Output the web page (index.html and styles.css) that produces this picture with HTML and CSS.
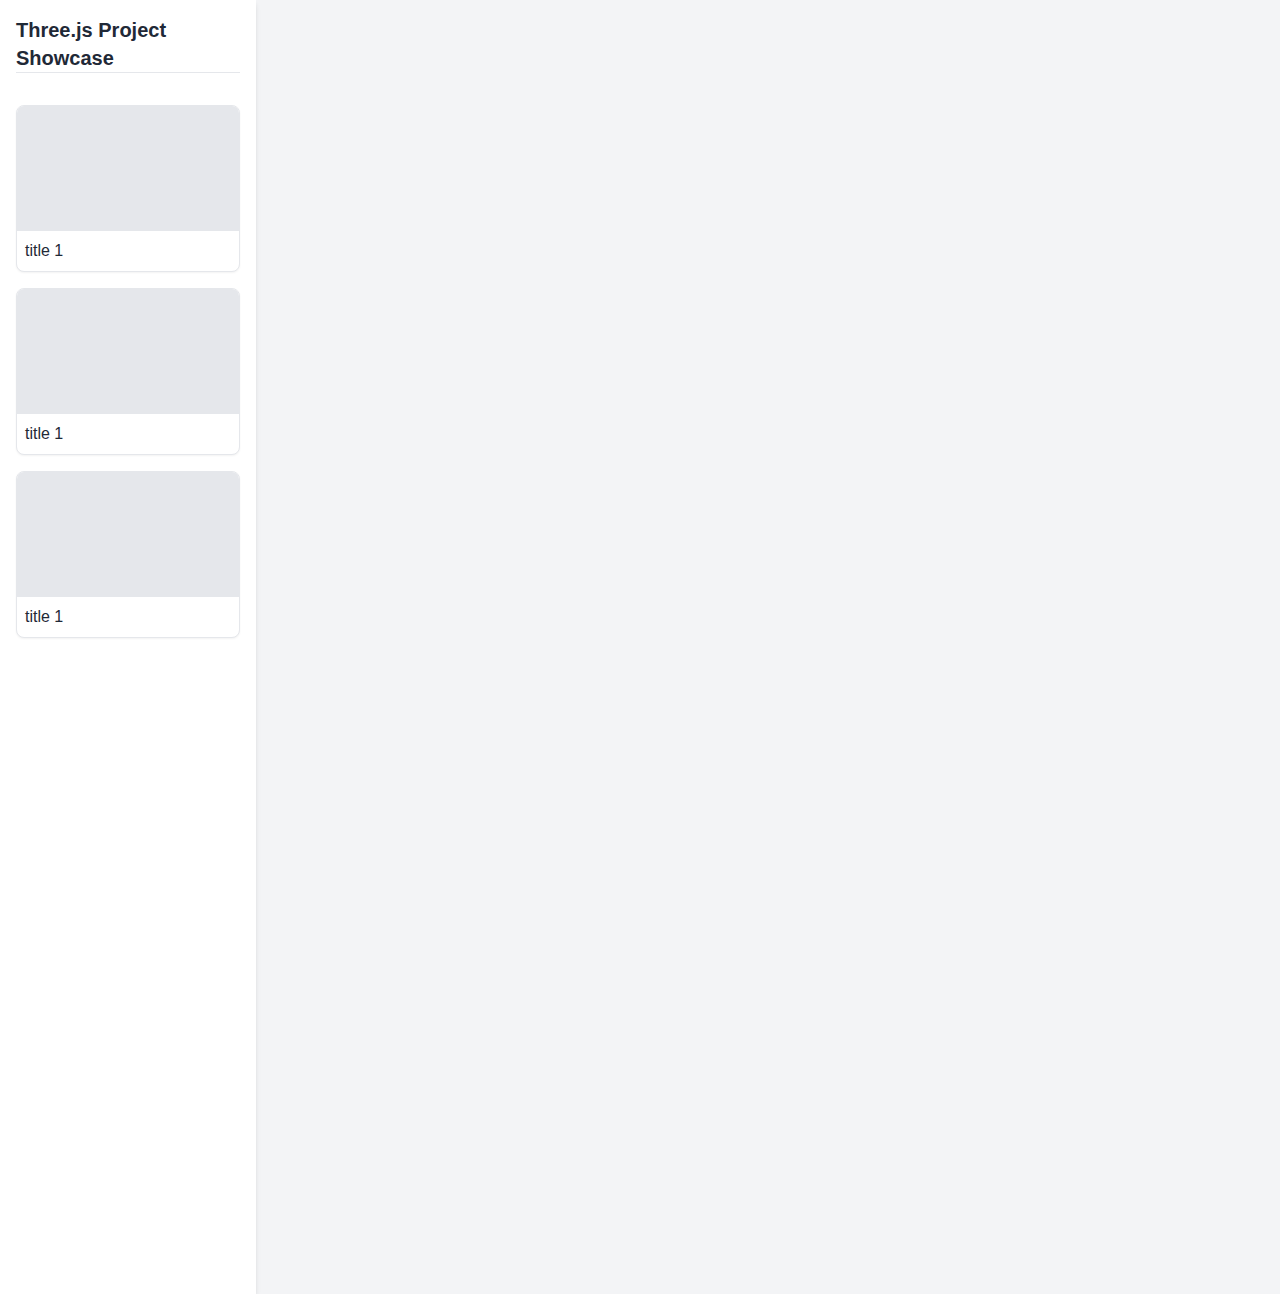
FILE: index.html
```html
<!DOCTYPE html>
<html>
<head>
<meta charset="utf-8">
<link rel="stylesheet" href="styles.css">
</head>
<body>
<div class="layout">
  <aside class="sidebar">
    <h1 class="heading">Three.js Project Showcase</h1>
    <div class="list">
      <div class="card"><div class="thumb"></div><div class="title">title 1</div></div>
      <div class="card"><div class="thumb"></div><div class="title">title 1</div></div>
      <div class="card"><div class="thumb"></div><div class="title">title 1</div></div>
    </div>
  </aside>
  <main class="main"></main>
</div>
</body>
</html>
```
FILE: styles.css
```css
* { box-sizing: border-box; }
html, body { margin: 0; padding: 0; height: 100%; }
body {
  font-family: "Liberation Sans", Arial, Helvetica, sans-serif;
  color: #1f2937;
  background: #f3f4f6;
}
.layout { display: flex; height: 1294px; }
.sidebar {
  width: 256px;
  flex: none;
  background: #ffffff;
  padding: 16px;
  box-shadow: 0 4px 6px -1px rgba(0,0,0,0.1), 0 2px 4px -1px rgba(0,0,0,0.06);
  position: relative;
  z-index: 1;
}
.heading {
  margin: 0 0 32px 0;
  font-size: 20px;
  line-height: 28px;
  font-weight: 700;
  border-bottom: 1px solid #e5e7eb;
}
.list { display: flex; flex-direction: column; gap: 16px; }
.card {
  border: 1px solid #e5e7eb;
  border-radius: 8px;
  overflow: hidden;
  background: #fff;
  box-shadow: 0 1px 2px rgba(0,0,0,0.05);
}
.thumb { aspect-ratio: 16 / 9; background: #e5e7eb; }
.title { padding: 8px; font-size: 16px; line-height: 24px; }
.main { flex: 1; background: #f3f4f6; }
```
